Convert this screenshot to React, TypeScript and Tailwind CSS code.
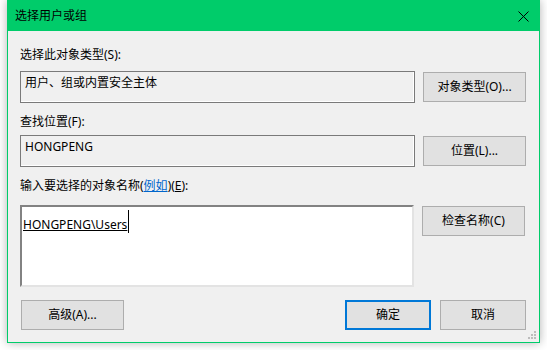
import React from "react";

const font = { fontFamily: '"Segoe UI", "Noto Sans", "Microsoft YaHei UI", "Noto Sans CJK SC", sans-serif' };

function Btn({ children, primary = false, className = "" }: { children: React.ReactNode; primary?: boolean; className?: string }) {
  return (
    <button
      className={
        "flex items-center justify-center bg-[#e1e1e1] text-[12px] leading-4 text-black " +
        (primary ? "border-2 border-[#0078d7] " : "border border-[#adadad] ") +
        className
      }
    >
      {children}
    </button>
  );
}

function ReadBox({ children }: { children: React.ReactNode }) {
  return (
    <div className="h-[32px] w-[395px] border border-[#7a7a7a] bg-[#f0f0f0] pl-[4px] pt-[3px] text-[12px] leading-4 shadow-[inset_-1px_-1px_0_#ffffff]">
      {children}
    </div>
  );
}

export default function App() {
  return (
    <div className="h-[350px] w-[547px] bg-white text-black" style={font}>
      <div className="relative ml-[7px] flex h-[343px] w-[533px] flex-col border border-[#00cc6a] bg-[#f0f0f0] shadow-[0_0_9px_rgba(0,0,0,0.3)]">
        {/* title bar */}
        <div className="flex h-[30px] items-center justify-between bg-[#00cc6a] pl-[7px] pr-[10px]">
          <span className="text-[12px] leading-4">选择用户或组</span>
          <svg width="11" height="11" viewBox="0 0 11 11" className="mt-[1px]">
            <path d="M0.5 0.5L10.5 10.5M10.5 0.5L0.5 10.5" stroke="#000" strokeWidth="1" />
          </svg>
        </div>

        <div className="flex flex-col pl-[12px] pr-[13px]">
          <div className="mt-[16px] text-[12px] leading-4">选择此对象类型(S):</div>
          <div className="mt-[8px] flex items-center gap-[8px]">
            <ReadBox>用户、组或内置安全主体</ReadBox>
            <Btn className="h-[30px] w-[103px]">对象类型(O)...</Btn>
          </div>

          <div className="mt-[11px] text-[12px] leading-4">查找位置(F):</div>
          <div className="mt-[5px] flex items-center gap-[8px]">
            <ReadBox>HONGPENG</ReadBox>
            <Btn className="h-[30px] w-[103px]">位置(L)...</Btn>
          </div>

          <div className="mt-[11px] text-[12px] leading-4">
            输入要选择的对象名称(<span className="text-[#0066cc] underline">例如</span>)(<span className="underline">E</span>):
          </div>
          <div className="mt-[11px] flex items-start gap-[8px]">
            <div className="h-[82px] w-[394px] border-2 border-b-[#e3e3e3] border-l-[#828282] border-r-[#e3e3e3] border-t-[#828282] bg-white pl-[1px] pt-[3px]">
              <div className="flex items-start text-[12px] leading-4">
                <span className="mt-[7px] underline">HONGPENG\Users</span>
                <span className="ml-[1px] inline-block h-[23px] w-px bg-black" />
              </div>
            </div>
            <Btn className="mt-[1px] h-[30px] w-[103px]">检查名称(C)</Btn>
          </div>

          <div className="mt-[13px] flex items-center">
            <Btn className="ml-[1px] h-[30px] w-[103px]">高级(A)...</Btn>
            <Btn primary className="ml-auto h-[30px] w-[86px]">确定</Btn>
            <Btn className="ml-[9px] h-[30px] w-[86px]">取消</Btn>
          </div>
        </div>

        {/* size grip */}
        <svg width="9" height="9" viewBox="0 0 9 9" className="absolute bottom-[2px] right-[2px]">
          <g fill="#bcbcbc">
            <rect x="6" y="0" width="2" height="2" />
            <rect x="3" y="3" width="2" height="2" />
            <rect x="6" y="3" width="2" height="2" />
            <rect x="0" y="6" width="2" height="2" />
            <rect x="3" y="6" width="2" height="2" />
            <rect x="6" y="6" width="2" height="2" />
          </g>
        </svg>
      </div>
    </div>
  );
}
